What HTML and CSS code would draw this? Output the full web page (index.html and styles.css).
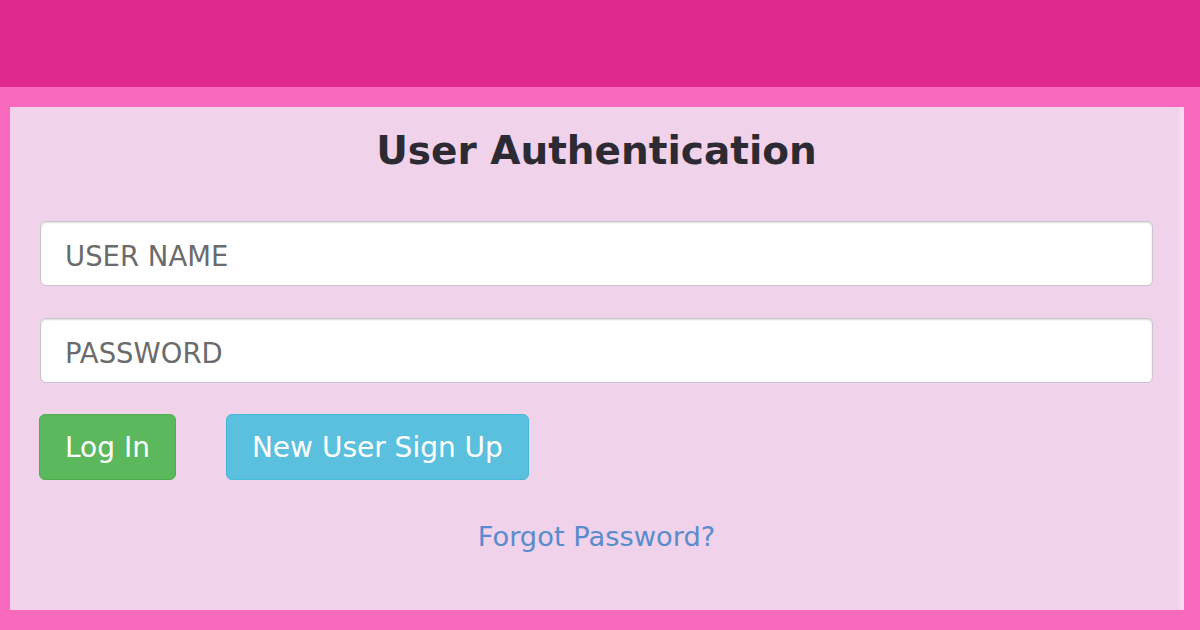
FILE: index.html
```html
<!DOCTYPE html>
<html lang="en">
<head>
    <meta charset="UTF-8">
    <meta name="viewport" content="width=device-width, initial-scale=1.0">
    <title>User Authentication</title>
    <link rel="stylesheet" href="styles.css">
</head>
<body>
    <!-- Top bar -->
    <div class="top-bar"></div>

    <div class="page">
        <div class="auth-panel">
            <h1 class="auth-title">User Authentication</h1>

            <form class="auth-form" onsubmit="return false;">
                <input class="auth-input" type="text" placeholder="USER NAME">
                <input class="auth-input" type="password" placeholder="PASSWORD">

                <div class="button-row">
                    <button class="btn btn-login" type="submit">Log In</button>
                    <button class="btn btn-signup" type="button">New User Sign Up</button>
                </div>
            </form>

            <a class="forgot-link" href="#">Forgot Password?</a>
        </div>
    </div>
</body>
</html>
```

FILE: styles.css
```css
/* Page basics */
body {
    margin: 0;
    height: 630px;
    display: flex;
    flex-direction: column;
    font-family: "DejaVu Sans", Verdana, sans-serif;
    background-color: #f96abf;
}

.top-bar {
    height: 87px;
    background-color: #df298e;      /* Dark pink header */
}

.page {
    flex: 1;
    padding: 20px 16px 20px 10px;
    display: flex;
}

.auth-panel {
    flex: 1;
    background-color: #f0d2ea;      /* Light pink card */
    border-right: 5px solid #f5dbef;
    padding: 20px 26px 0 30px;
    display: flex;
    flex-direction: column;
}

.auth-title {
    margin: 0 0 47px 0;
    font-size: 39px;
    line-height: 47px;
    font-weight: bold;
    text-align: center;
    color: #2c2b33;
}

.auth-form {
    display: flex;
    flex-direction: column;
}

.auth-input {
    height: 65px;
    box-sizing: border-box;
    margin-bottom: 32px;
    padding: 5px 24px 0 24px;
    border: 1px solid #cbc4ca;
    border-radius: 6px;
    background-color: #ffffff;
    box-shadow: inset 0 1px 2px rgba(0, 0, 0, 0.14);
    font-family: inherit;
    font-size: 27.5px;
    color: #555555;
}

.auth-input:last-of-type {
    margin-bottom: 31px;
}

.auth-input::placeholder {
    color: #6b6b6b;
}

.button-row {
    display: flex;
    gap: 50px;
    margin-left: -1px;
}

.btn {
    height: 66px;
    padding: 0 25px;
    border-radius: 6px;
    font-family: inherit;
    font-size: 28px;
    color: #ffffff;
    cursor: pointer;
}

.btn-login {
    background-color: #5cb85c;
    border: 1px solid #4cae4c;
}

.btn-signup {
    background-color: #5bc0de;
    border: 1px solid #46b8da;
}

.forgot-link {
    margin-top: 41px;
    align-self: center;
    font-size: 27.3px;
    line-height: 32px;
    color: #5a8ccd;
    text-decoration: none;
}
```
